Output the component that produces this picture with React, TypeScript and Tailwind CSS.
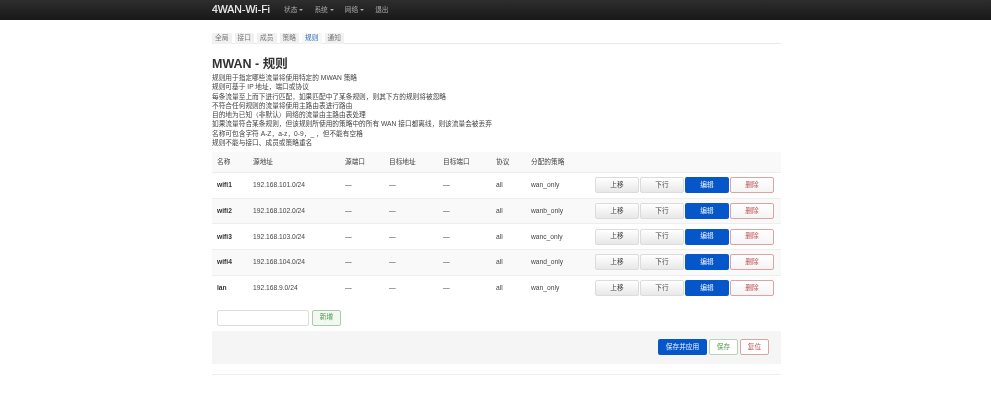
import React from "react";

const tabs = ["全局", "接口", "成员", "策略", "规则", "通知"];
const menus = ["状态", "系统", "网络"];
const notes = [
  "规则用于指定哪些流量将使用特定的 MWAN 策略",
  "规则可基于 IP 地址，端口或协议",
  "每条流量至上而下进行匹配，如果匹配中了某条规则，则其下方的规则将被忽略",
  "不符合任何规则的流量将使用主路由表进行路由",
  "目的地为已知（非默认）网络的流量由主路由表处理",
  "如果流量符合某条规则，但该规则所使用的策略中的所有 WAN 接口都离线，则该流量会被丢弃",
  "名称可包含字符 A-Z，a-z，0-9，_ ，但不能有空格",
  "规则不能与接口、成员或策略重名",
];
const rules = [
  { name: "wifi1", src: "192.168.101.0/24", policy: "wan_only" },
  { name: "wifi2", src: "192.168.102.0/24", policy: "wanb_only" },
  { name: "wifi3", src: "192.168.103.0/24", policy: "wanc_only" },
  { name: "wifi4", src: "192.168.104.0/24", policy: "wand_only" },
  { name: "lan", src: "192.168.9.0/24", policy: "wan_only" },
];

const grey =
  "h-4 w-[44px] rounded-[2px] border border-[#dcdcdc] bg-gradient-to-b from-white to-[#e8e8e8] text-[6.7px] leading-none text-[#444]";

function RowActions() {
  return (
    <div className="flex gap-[1px]">
      <button className={grey}>上移</button>
      <button className={grey}>下行</button>
      <button className="h-4 w-[44px] rounded-[2px] bg-[#0556c8] text-[6.7px] leading-none text-[#f0f4fc]">
        编辑
      </button>
      <button className="h-4 w-[44px] rounded-[2px] border border-[#dda3a3] bg-gradient-to-b from-white to-[#f4f4f4] text-[6.7px] leading-none text-[#c04f4f]">
        删除
      </button>
    </div>
  );
}

export default function App() {
  return (
    <div className="min-h-[400px] bg-white font-['Liberation_Sans','Noto_Sans_CJK_SC',sans-serif] text-[6.7px] text-[#444] blur-[0.3px]">
      <header className="flex h-5 items-center bg-gradient-to-b from-[#2e2e2e] to-[#181818] pl-[212px]">
        <span className="w-[72px] text-[10.5px] font-medium text-[#f0f0f0] [-webkit-text-stroke:0.2px_#f0f0f0]">4WAN-Wi-Fi</span>
        <nav className="flex items-center gap-[11px] text-[6.7px] text-[#aaa]">
          {menus.map((m) => (
            <span key={m} className="flex items-center gap-[2px]">
              {m}
              <span className="mt-[1px] h-0 w-0 border-x-[2px] border-t-[2px] border-x-transparent border-t-[#aaa]" />
            </span>
          ))}
          <span>退出</span>
        </nav>
      </header>

      <main className="ml-[212px] w-[569px]">
        <div className="mt-[13px] flex h-[11px] gap-[3px] border-b border-[#e8e8e8]">
          {tabs.map((t) => (
            <span
              key={t}
              className={
                t === "规则"
                  ? "flex h-[11px] w-[19.5px] items-center justify-center rounded-t-[1px] bg-[#f7f7f7] text-[#2f72bd]"
                  : "flex h-[11px] w-[19.5px] items-center justify-center rounded-t-[1px] bg-[#f1f1f1] text-[#777]"
              }
            >
              {t}
            </span>
          ))}
        </div>

        <h2 className="mt-[13px] text-[12.5px] leading-[15px] font-bold text-[#333]">MWAN - 规则</h2>
        <div className="mt-[1px] leading-[9.3px]">
          {notes.map((n) => (
            <div key={n}>{n}</div>
          ))}
        </div>

        <table className="mt-[5px] w-[569px] table-fixed border-collapse text-left text-[6.7px]">
          <colgroup>
            <col className="w-[36px]" />
            <col className="w-[92px]" />
            <col className="w-[44px]" />
            <col className="w-[54px]" />
            <col className="w-[53px]" />
            <col className="w-[35px]" />
            <col className="w-[64px]" />
            <col />
          </colgroup>
          <thead>
            <tr className="h-5 border-b border-[#eeeeee] bg-[#f9f9f9]">
              {["名称", "源地址", "源端口", "目标地址", "目标端口", "协议", "分配的策略", ""].map((h) => (
                <th key={h} className="pl-[5px] font-normal">
                  {h}
                </th>
              ))}
            </tr>
          </thead>
          <tbody>
            {rules.map((r, i) => (
              <tr
                key={r.name}
                className={`h-[25.7px] ${i < 4 ? "border-b border-[#eeeeee]" : ""} ${i % 2 === 1 ? "bg-[#f9f9f9]" : "bg-white"}`}
              >
                <td className="pl-[5px] font-bold text-[#333]">{r.name}</td>
                <td className="pl-[5px]">{r.src}</td>
                <td className="pl-[5px]">—</td>
                <td className="pl-[5px]">—</td>
                <td className="pl-[5px]">—</td>
                <td className="pl-[5px]">all</td>
                <td className="pl-[5px]">{r.policy}</td>
                <td className="pl-[5px]">
                  <RowActions />
                </td>
              </tr>
            ))}
          </tbody>
        </table>

        <div className="mt-[9px] flex h-4 gap-[3px] pl-[5px]">
          <input className="h-4 w-[92px] rounded-[2px] border border-[#dddddd] bg-white" />
          <button className="h-4 w-[29px] rounded-[2px] border border-[#a9cba9] bg-[#f4f8f2] text-[6.7px] leading-none text-[#4c9a4c]">
            新增
          </button>
        </div>

        <div className="mt-[5px] flex h-[33px] items-center justify-end gap-[2px] bg-[#f5f5f5] pr-[12px]">
          <button className="h-4 w-[49px] rounded-[2px] bg-[#0556c8] text-[6.7px] leading-none text-[#f0f4fc]">
            保存并应用
          </button>
          <button className="h-4 w-[29px] rounded-[2px] border border-[#b5d3b5] bg-white text-[6.7px] leading-none text-[#4c9a4c]">
            保存
          </button>
          <button className="h-4 w-[29px] rounded-[2px] border border-[#dda3a3] bg-white text-[6.7px] leading-none text-[#c04f4f]">
            复位
          </button>
        </div>

        <div className="mt-[10px] border-t border-[#eeeeee]" />
      </main>
    </div>
  );
}
